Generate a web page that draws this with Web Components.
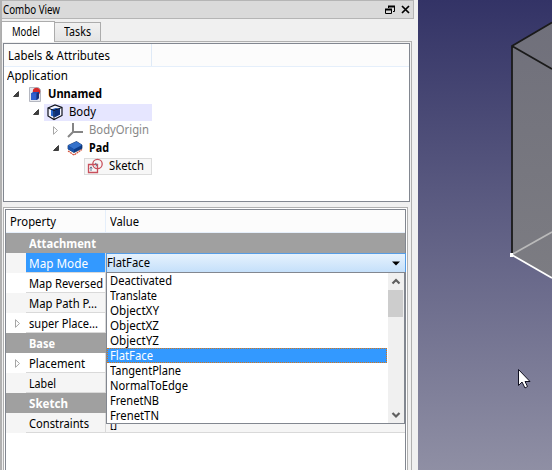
<!DOCTYPE html>
<html lang="en"><head><meta charset="utf-8"><title>Combo View</title>
<style>body{margin:0;overflow:hidden;font:12px/18px "Noto Sans","Open Sans",sans-serif;color:#000}</style></head>
<body><cad-window></cad-window>
<script>
const make=(name,html,ready)=>customElements.define(name,class extends HTMLElement{
  connectedCallback(){
    if(this.shadowRoot)return;
    const t=document.createElement('template');
    t.innerHTML='<style>*{box-sizing:border-box}:host{box-sizing:border-box;display:block}</style>'+(typeof html==='function'?html(this):html);
    this.attachShadow({mode:'open'}).append(t.content.cloneNode(true));
    if(ready)ready(this);
  }
});

// A label condensed horizontally to the width in its w attribute.
make('fit-label','<style>:host{white-space:pre;flex:none;height:var(--line,18px);line-height:var(--line,18px)}span{display:inline-block;vertical-align:top;transform-origin:0 50%}:host([bold]){font-weight:700}</style><span><slot></slot></span>',el=>{
  const s=el.shadowRoot.querySelector('span'),w=+el.getAttribute('w');
  const n=s.getBoundingClientRect().width;
  s.style.transform=`scaleX(${w/n})`;
  el.style.width=w+'px';
});

const icons={
 doc:'<path d="M2.500 1.500h9l2 2v12h-11z" fill="#e6e8ee" stroke="#b4b7c0"/><circle cx="9.500" cy="5.500" r="3.700" fill="#d52b2b"/><path d="M4 7.500l2-1.500h6v6l-2 2H4z" fill="#2450b8"/><path d="M4 7.500h5.500V14H4z" fill="#3160cf"/><path d="M9.500 7.500L12 6v6l-2.500 2z" fill="#183078"/>',
 body:'<path d="M1 4l7-3 7 2.500v8L7 15.500 1 12z" fill="#f4f5ff" stroke="#10131c" stroke-width="1.200"/><path d="M4 5.500l5-1.500 4 1v5.500l-5 2.500-4-1.500z" fill="#164fb4"/><path d="M4 5.500l4 1.200V13l-4-1.500z" fill="#2566cd"/><path d="M8 6.700L13 5v5.500L8 13z" fill="#0b2f78"/><path d="M1 4l6 2.500L15 3.500M7 6.500v9" fill="none" stroke="#10131c" stroke-width="1"/>',
 axis:'<path d="M6 1v9M6 10h10M6 10l-5 5" fill="none" stroke="#858585" stroke-width="2"/>',
 pad:'<path d="M1 11l6 4 8-5.500" fill="none" stroke="#d44f38" stroke-width="1.200" stroke-dasharray="2 .6"/><path d="M1 5.500L9.500 1.500 15 5v3.500L7 12.500 1 9z" fill="#0d3d8b" stroke="#082759" stroke-width=".7"/><path d="M1 5.500L9.500 1.500 15 5 7 9.200z" fill="#3572cb"/><path d="M1 5.500l6 3.700v3.300L1 9z" fill="#1b54ac"/>',
 sketch:'<g fill="none" stroke="#c8505c" stroke-width="1.300"><circle cx="10.500" cy="6" r="4.700"/><path d="M1.500 6.500h9v8h-9z"/></g><path d="M4 13V9M2.800 10.500L4 8.800l1.200 1.700M8 5l2 1.500-1 2" fill="none" stroke="#687895"/>'
};
make('ui-icon',el=>`<style>:host{width:16px;height:17px;flex:none}svg{display:block}</style><svg width="16" height="17" viewBox="0 0 16 17">${icons[el.getAttribute('name')]}</svg>`);
make('tree-arrow',el=>`<style>:host{width:8px;height:9px;flex:none}svg{display:block}</style><svg width="8" height="9">${el.hasAttribute('open')?'<path d="M6.500 1.500v5h-5z" fill="#404040" stroke="#262626" stroke-width=".8"/>':'<path d="M1.500 .7v7.600L5.500 4.500z" fill="#fff" stroke="#a6a6a6"/>'}</svg>`);

make('title-bar',`<style>:host{display:flex;height:19px;width:412px;margin-left:2px;background:#dadada;border:solid #b5b5b5;border-width:1px 1px 1px 0;align-items:center;padding-left:1px}
fit-label{margin-top:1px}svg{margin-left:auto;margin-right:3px}</style><fit-label w="57">Combo View</fit-label>
<svg width="26" height="12"><g fill="none" stroke="#000"><path d="M4.500 4V2.500h6v5H9M1.500 5.500h6v4h-6z"/><path d="M1 5.500h7M4 2.500h7" stroke-width="2"/></g><path d="M18 2l7 7M25 2l-7 7" stroke="#000" stroke-width="1.700"/></svg>`);

make('tab-strip',`<style>:host{display:flex;align-items:flex-end;height:20px;margin:2px 0 0 1px;position:relative;z-index:1}
div{border:1px solid #acacac;border-bottom:0}
.m{width:54px;height:21px;margin-bottom:-1px;background:#fff;padding:1px 0 0 10px}
.t{width:46px;height:19px;background:linear-gradient(#f1f1f1,#e4e4e4);border-left:0;padding:0 0 0 9px}</style>
<div class="m"><fit-label w="28">Model</fit-label></div><div class="t"><fit-label w="27">Tasks</fit-label></div>`);

make('tree-item',el=>`<style>:host{display:flex;align-items:center;height:18px;padding-left:${el.getAttribute('indent')}px}
tree-arrow{margin-right:${el.getAttribute('gap')||10}px}
.b{display:flex;align-items:center;height:17px;flex:none;padding-left:3px}
.body{width:108px;background:#e6e6ff}.sketch{width:68px;background:#f7f7f7;border:1px solid #dcdcdc;padding-left:2px}
fit-label{margin-left:6px}.doc fit-label{margin-left:5px}:host([muted]){color:#888}</style>
${el.hasAttribute('leaf')?'':`<tree-arrow ${el.hasAttribute('open')?'open':''}></tree-arrow>`}<div class="b ${el.getAttribute('icon')}"><ui-icon name="${el.getAttribute('icon')}"></ui-icon><fit-label w="${el.getAttribute('w')}" ${el.hasAttribute('bold')?'bold':''}>${el.getAttribute('label')}</fit-label></div>`);

make('model-tree',`<style>:host{height:159px;border:1px solid #828790;background:#fff;width:407px;margin-left:2px}
.h{height:23px;border-bottom:1px solid #e5effb;background:#fcfcfc;display:flex;padding:3px 0 0 4px}
.h i{margin:-3px 0 0 41px;border-left:1px solid #dfeaf7;height:22px}.a{height:18px;padding-left:3px}</style>
<div class="h"><fit-label w="102">Labels &amp; Attributes</fit-label><i></i></div><div class="a"><fit-label w="61">Application</fit-label></div>
<tree-item indent="8" gap="4" open bold icon="doc" w="54" label="Unnamed"></tree-item>
<tree-item indent="28" gap="4" open icon="body" w="27" label="Body"></tree-item>
<tree-item indent="48" gap="4" muted icon="axis" w="60" label="BodyOrigin"></tree-item>
<tree-item indent="48" gap="4" open bold icon="pad" w="20" label="Pad"></tree-item>
<tree-item indent="80" leaf icon="sketch" w="35" label="Sketch"></tree-item>`);

make('property-row',el=>`<style>:host{display:grid;grid-template-columns:20px 80px 1fr;height:20px;background:#fff}
:host([alt]){background:#f5f5f5}:host([group]){background:#a0a0a0;color:#fff}
.i{padding:6px 0 0 8px}.n,.v{border-bottom:1px solid #d9d9d9;padding:2px 0 0 3px;height:20px}.n{border-right:1px solid #d9d9d9}
:host([group]) .n{border-right:0}:host([group=first]) .n,:host([group=first]) .v{border-bottom-color:#d9d9d9}:host([group]) .n,:host([group]) .v{border-bottom-color:#a0a0a0}
:host([selected]) .n{background:#3399ff;color:#fff}.v{padding:2px 0 0 4px}</style>
<div class="i">${el.hasAttribute('arrow')?'<tree-arrow></tree-arrow>':''}</div><div class="n"><fit-label w="${el.getAttribute('w')}" ${el.hasAttribute('group')?'bold':''}>${el.getAttribute('name')}</fit-label></div><div class="v"><slot></slot></div>`);

make('mode-select',()=>{
 const items=[['Deactivated',62],['Translate',47],['ObjectXY',49],['ObjectXZ',49],['ObjectYZ',49],['FlatFace',43],['TangentPlane',71],['NormalToEdge',78],['FrenetNB',49],['FrenetTN',49]];
 return `<style>:host{position:absolute;left:100px;top:43px;width:300px;height:171px;z-index:2}
.c{height:20px;border:1px solid #569de5;background:linear-gradient(#e6f2fd,#c5e0fa);display:flex;align-items:center}.c svg{margin:0 5px 0 auto}
.l{height:152px;margin-top:-1px;border:1px solid #828790;border-right-width:2px;background:#fff;display:grid;grid-template-columns:281px 16px}
.o{height:15px;padding-left:3px;--line:15px}.s{width:280px;background:#3399ff;outline:1px dotted #d77517;outline-offset:-1px;color:#fff}
.b{background:#f0f0f0;display:flex;flex-direction:column;align-items:center}.b i{display:block;width:15px;height:27px;background:#cdcdcd;align-self:flex-start}.b svg:last-child{margin-top:auto}</style>
<div class="c"><fit-label w="43">FlatFace</fit-label><svg width="8" height="5"><path d="M0 .5h8L4 4.500z"/></svg></div><div class="l"><div>${items.map(([t,w])=>`<div class="o ${t==='FlatFace'?'s':''}"><fit-label w="${w}">${t}</fit-label></div>`).join('')}</div>
<div class="b"><svg width="16" height="17"><path d="M4.500 10.500L8 7l3.500 3.500" fill="none" stroke="#606060" stroke-width="2.200"/></svg><i></i><svg width="16" height="17"><path d="M4.500 7L8 10.500 11.500 7" fill="none" stroke="#606060" stroke-width="2.200"/></svg></div></div>`;});

make('property-table',`<style>:host{margin:5px 0 0 2px;width:405px;height:270px;border:1px solid #b0b0b0;border-bottom:0;background:#fff;padding:1px 1px 0}
.f{position:relative;border:1px solid #828790;border-bottom:0;height:268px;width:401px}
.h{height:23px;border-bottom:1px solid #e5effb;background:#fcfcfc;display:grid;grid-template-columns:99px 1fr;padding:3px 0 0 4px}
.h div+div{border-left:1px solid #e5effb;margin-top:-3px;padding:3px 0 0 4px;margin-left:-4px}</style>
<div class="f"><div class="h"><div><fit-label w="46">Property</fit-label></div><div><fit-label w="29">Value</fit-label></div></div>
<property-row group name="Attachment" w="67"></property-row><property-row alt selected name="Map Mode" w="59"></property-row>
<property-row name="Map Reversed" w="74"></property-row><property-row alt name="Map Path P..." w="68"></property-row>
<property-row arrow name="super Place..." w="69"></property-row><property-row group name="Base" w="26"></property-row>
<property-row arrow name="Placement" w="56"></property-row><property-row alt name="Label" w="27"></property-row>
<property-row group name="Sketch" w="39"></property-row><property-row alt name="Constraints" w="60"><fit-label w="7">[]</fit-label></property-row>
<mode-select></mode-select></div>`);

make('combo-panel',`<style>:host{width:418px;height:470px;background:#f0f0f0;border-left:2px solid #b2b2b2;position:relative}
.w{margin-left:-2px}.p{margin-left:1px;width:411px;height:429px;border:1px solid #b0b0b0;border-bottom:0;padding-top:1px}
.p model-tree,.p property-table{margin-left:1px}</style>
<div class="w"><title-bar></title-bar><tab-strip></tab-strip><div class="p"><model-tree></model-tree><property-table></property-table></div></div>`);

make('solid-view',`<style>:host{width:134px;height:470px}svg{display:block}</style><svg width="134" height="470">
<defs><linearGradient id="sky" x1="0" y1="0" x2="0" y2="1"><stop stop-color="#333366"/><stop offset="1" stop-color="#8f8fa4"/></linearGradient><linearGradient id="face" x1="0" y1="0" x2="0" y2="1"><stop stop-color="#70707b"/><stop offset="1" stop-color="#7c7c82"/></linearGradient></defs>
<path fill="url(#sky)" d="M0 0h134v470H0z"/><path fill="url(#face)" d="M94 46l40-23.500V278l-40-23z"/>
<g fill="none" stroke="#1a1a1a" stroke-width="1.800"><path d="M134 22.500L94 46v209M94 46l40 23"/></g><path d="M94 254.500l40-22.500" stroke="#bababa" stroke-width="1.700"/><path d="M94 255l40 23" stroke="#fff" stroke-width="1.800"/><path d="M92 253h3v4h-3z" fill="#fff"/>
<path d="M100.500 369.500v16l3.500-3.500 3 6 2.500-1.500-2.500-5h5z" fill="#fff" stroke="#101020"/></svg>`);

make('cad-window','<style>:host{display:grid;grid-template-columns:418px 134px;width:552px;height:470px;overflow:hidden}</style><combo-panel></combo-panel><solid-view></solid-view>');
</script></body></html>
